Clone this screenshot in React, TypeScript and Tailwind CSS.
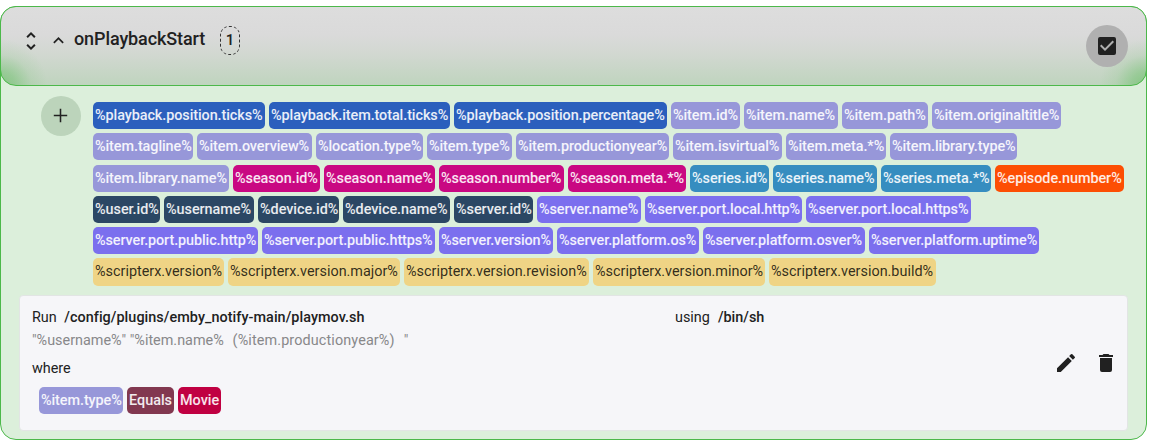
import React from "react";

type Kind = "playback" | "item" | "season" | "series" | "episode" | "user" | "server" | "script" | "op" | "value";

const KINDS: Record<Kind, string> = {
  playback: "bg-[#2b5fbd] text-white/90 font-medium tracking-[-0.07px]",
  item: "bg-[#9797d9] text-white/90 font-medium tracking-[-0.07px]",
  season: "bg-[#c90882] text-white/90 font-medium tracking-[-0.05px]",
  series: "bg-[#368dc0] text-white/90 font-medium tracking-[-0.05px]",
  episode: "bg-[#fd4e03] text-white/90 font-medium tracking-[-0.05px]",
  user: "bg-[#2b4764] text-white/90 font-medium tracking-[-0.04px]",
  server: "bg-[#7b6fee] text-white/90 font-medium tracking-[-0.09px]",
  script: "bg-[#efd485] text-black/80 font-normal",
  op: "bg-[#823850] text-white/90 font-medium",
  value: "bg-[#c00042] text-white/90 font-medium",
};

const ROWS: [Kind, string, number][][] = [
  [
    ["playback", "playback.position.ticks", 172],
    ["playback", "playback.item.total.ticks", 181],
    ["playback", "playback.position.percentage", 213],
    ["item", "item.id", 69],
    ["item", "item.name", 94],
    ["item", "item.path", 86],
    ["item", "item.originaltitle", 129],
  ],
  [
    ["item", "item.tagline", 100],
    ["item", "item.overview", 115],
    ["item", "location.type", 107],
    ["item", "item.type", 85],
    ["item", "item.productionyear", 153],
    ["item", "item.isvirtual", 109],
    ["item", "item.meta.*", 100],
    ["item", "item.library.type", 127],
  ],
  [
    ["item", "item.library.name", 136],
    ["season", "season.id", 87],
    ["season", "season.name", 111],
    ["season", "season.number", 125],
    ["season", "season.meta.*", 118],
    ["series", "series.id", 79],
    ["series", "series.name", 104],
    ["series", "series.meta.*", 110],
    ["episode", "episode.number", 129],
  ],
  [
    ["user", "user.id", 67],
    ["user", "username", 90],
    ["user", "device.id", 81],
    ["user", "device.name", 107],
    ["user", "server.id", 79],
    ["server", "server.name", 104],
    ["server", "server.port.local.http", 157],
    ["server", "server.port.local.https", 165],
  ],
  [
    ["server", "server.port.public.http", 165],
    ["server", "server.port.public.https", 173],
    ["server", "server.version", 114],
    ["server", "server.platform.os", 142],
    ["server", "server.platform.osver", 162],
    ["server", "server.platform.uptime", 170],
  ],
  [
    ["script", "scripterx.version", 131],
    ["script", "scripterx.version.major", 172],
    ["script", "scripterx.version.revision", 185],
    ["script", "scripterx.version.minor", 172],
    ["script", "scripterx.version.build", 167],
  ],
];

function Tag({ kind, width, children }: { kind: Kind; width: number; children: React.ReactNode }) {
  return (
    <span
      style={{ width }}
      className={`block h-[27.2px] shrink-0 whitespace-nowrap rounded-[5px] px-[2px] text-[14.4px] leading-[27px] ${KINDS[kind]}`}
    >
      {children}
    </span>
  );
}

function Icon({ d, className }: { d: string; className: string }) {
  return (
    <svg viewBox="0 0 24 24" fill="currentColor" className={className}>
      <path d={d} />
    </svg>
  );
}

export default function App() {
  return (
    <div className="h-[443px] w-[1152px] overflow-hidden bg-white pt-[6px] font-['Roboto',sans-serif] text-[14.4px] text-[#212121]">
      <section className="h-[434px] w-[1147px] rounded-[16px] border border-[#4cb84a] bg-[#dcefdb]">
        <header className="-mx-px -mt-px flex h-[80px] items-start rounded-[16px] border border-[#4cb84a] bg-[radial-gradient(circle_at_0%_100%,rgba(76,184,74,0.5)_0,rgba(76,184,74,0.36)_14px,rgba(76,184,74,0.1)_30px,rgba(76,184,74,0)_46px),radial-gradient(circle_at_100%_100%,rgba(76,184,74,0.5)_0,rgba(76,184,74,0.36)_14px,rgba(76,184,74,0.1)_30px,rgba(76,184,74,0)_46px),linear-gradient(#dddddd_0%,#dadada_35%,#d2d8d1_60%,#bfd4be_100%)]">
          <Icon
            className="ml-[18px] mt-[22px] size-6"
            d="M12 5.83 15.17 9l1.41-1.41L12 3 7.41 7.59 8.83 9 12 5.83zm0 12.34L8.83 15l-1.41 1.41L12 21l4.59-4.59L15.17 15 12 18.17z"
          />
          <Icon className="ml-[5px] mt-[23px] size-[21px]" d="M12 8l-6 6 1.41 1.41L12 10.83l4.59 4.58L18 14z" />
          <h1 className="ml-[5px] mt-[20px] w-[131px] text-[18px] font-medium leading-6 tracking-[-0.1px]">onPlaybackStart</h1>
          <span className="ml-[15px] mt-[19px] flex h-[29px] w-[20px] items-center justify-center rounded-[9px] border border-dashed border-[#333] text-[15px] font-medium">
            1
          </span>
          <button className="ml-auto mr-[18px] mt-[18px] flex size-[42px] items-center justify-center rounded-full bg-[#b0b0b0]">
            <Icon
              className="-mt-px size-6"
              d="M19 3H5a2 2 0 0 0-2 2v14a2 2 0 0 0 2 2h14a2 2 0 0 0 2-2V5a2 2 0 0 0-2-2zm-9 14-5-5 1.41-1.41L10 14.17l7.59-7.59L19 8l-9 9z"
            />
          </button>
        </header>

        <div className="flex h-[209px] items-start">
          <button className="ml-[40px] mt-[10px] flex size-10 items-center justify-center rounded-full bg-[#bcd4bb]">
            <Icon className="-mt-px mr-px size-[23px]" d="M19 12.8h-6.2v6.2h-1.6v-6.2H5v-1.6h6.2V5h1.6v6.2H19v1.6z" />
          </button>
          <div className="ml-[12px] mt-[16px] flex flex-col gap-[4.1px]">
            {ROWS.map((row, i) => (
              <div key={i} className="flex gap-1">
                {row.map(([kind, name, width]) => (
                  <Tag key={name} kind={kind} width={width}>{`%${name}%`}</Tag>
                ))}
              </div>
            ))}
          </div>
        </div>

        <article className="ml-[18px] flex h-[136px] w-[1109px] rounded-[4px] border border-[#e2e5e4] bg-[#f6f6f9]">
          <div className="w-[644px] pl-[12px] pt-[12px]">
            <p className="flex gap-[7.5px] leading-[19px]">
              Run <b className="font-medium tracking-[0.05px]">/config/plugins/emby_notify-main/playmov.sh</b>
            </p>
            <p className="mt-[4px] whitespace-pre leading-[19px] text-[#88888a]">
              {'"%username%" "%item.name%'}
              <span className="ml-[1.5px] tracking-[0.12px]">{"  (%item.productionyear%)"}</span>
              <span className="ml-[2px]">{'  "'}</span>
            </p>
            <p className="mt-[9px] leading-[19px]">where</p>
            <div className="ml-[7px] mt-[9px] flex gap-1">
              <Tag kind="item" width={84}>%item.type%</Tag>
              <Tag kind="op" width={47}>Equals</Tag>
              <Tag kind="value" width={43}>Movie</Tag>
            </div>
          </div>
          <p className="flex gap-2 pl-[11px] pt-[12px] leading-[19px]">
            using <b className="font-medium">/bin/sh</b>
          </p>
          <div className="ml-auto mr-[9px] mt-[55px] flex gap-4">
            <Icon
              className="size-6"
              d="M3 17.25V21h3.75L17.81 9.94l-3.75-3.75L3 17.25zM20.71 7.04a1 1 0 0 0 0-1.41l-2.34-2.34a1 1 0 0 0-1.41 0l-1.83 1.83 3.75 3.75 1.83-1.83z"
            />
            <Icon className="size-6" d="M6 19a2 2 0 0 0 2 2h8a2 2 0 0 0 2-2V7H6v12zM19 4h-3.5l-1-1h-5l-1 1H5v2h14V4z" />
          </div>
        </article>
      </section>
    </div>
  );
}
